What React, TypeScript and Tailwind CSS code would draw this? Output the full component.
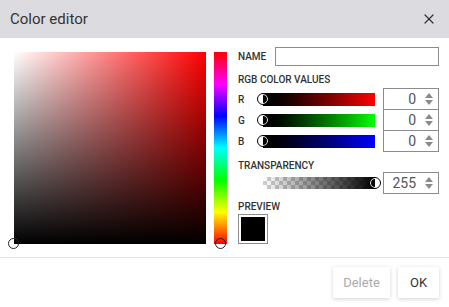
import React from 'react';
import { X } from 'lucide-react';

const Thumb = ({ className }: { className: string }) => (
  <div
    className={`absolute w-[12px] h-[12px] rounded-full border border-black shadow-[inset_0_0_0_1px_#fff] ${className}`}
  />
);

const Spinner = ({ value }: { value: string }) => (
  <div className="w-[56px] h-[22px] border border-[#8c8c8c] bg-white flex items-center justify-end pr-[5px] gap-[9px]">
    <span className="text-[14px] text-[#555] leading-none">{value}</span>
    <div className="flex flex-col items-center gap-[2px]">
      <div className="w-0 h-0 border-x-[4.5px] border-x-transparent border-b-[5px] border-b-[#8a8a8a]" />
      <div className="w-0 h-0 border-x-[4.5px] border-x-transparent border-t-[5px] border-t-[#8a8a8a]" />
    </div>
  </div>
);

const SliderRow = ({ label, gradient, value }: { label: string; gradient: string; value: string }) => (
  <div className="flex items-center h-[22px] -mt-px first:mt-0">
    <span className="w-[25px] text-[10px] font-medium text-[#333]">{label}</span>
    <div className="relative w-[112px] h-[13px]">
      <div className={`w-full h-full ${gradient}`} />
      <Thumb className="-left-[6px] top-[0.5px]" />
    </div>
    <div className="ml-[8px]">
      <Spinner value={value} />
    </div>
  </div>
);

export default function App() {
  return (
    <div className="w-[449px] h-[307px] bg-white flex flex-col font-['Roboto',sans-serif] text-[#333]">
      {/* Header */}
      <div className="h-[38px] bg-[#dcdbe0] flex items-center justify-between pl-[10px] pr-[12px]">
        <span className="text-[15px] text-[#333]">Color editor</span>
        <X size={16} strokeWidth={1.8} className="text-[#333]" />
      </div>

      {/* Body */}
      <div className="flex h-[220px] border-b border-[#e3e3e3] pl-[14px] pt-[9px]">
        <div className="mt-[5px] relative w-[192px] h-[192px] bg-[#ff0000]">
          <div className="absolute inset-0 bg-linear-to-r from-white to-transparent" />
          <div className="absolute inset-0 bg-linear-to-b from-transparent to-black" />
          <div className="absolute -left-[6px] -bottom-[5px] w-[11px] h-[11px] rounded-full border-[1.5px] border-[#222]" />
        </div>
        <div className="mt-[5px] ml-[8px] relative w-[13px] h-[192px] bg-[linear-gradient(to_bottom,#f00,#f0f,#00f,#0ff,#0f0,#ff0,#f00)]">
          <div className="absolute left-[1px] -bottom-[5px] w-[11px] h-[11px] rounded-full border-[1.5px] border-[#222]" />
        </div>

        {/* Right panel */}
        <div className="ml-[11px] flex flex-col">
          <div className="flex items-center h-[19px]">
            <span className="w-[37px] text-[10px] font-medium text-[#333]">NAME</span>
            <div className="w-[164px] h-[19px] border border-[#8c8c8c]" />
          </div>
          <div className="mt-[8px] text-[10px] font-medium text-[#333] leading-[11px]">RGB COLOR VALUES</div>
          <div className="mt-[3px] flex flex-col">
            <SliderRow label="R" value="0" gradient="bg-linear-to-r from-black to-[#ff0000]" />
            <SliderRow label="G" value="0" gradient="bg-linear-to-r from-black to-[#00ff00]" />
            <SliderRow label="B" value="0" gradient="bg-linear-to-r from-black to-[#0000ff]" />
          </div>
          <div className="mt-[8px] text-[10px] font-medium text-[#333] leading-[11px]">TRANSPARENCY</div>
          <div className="mt-[2px] flex items-center h-[20px]">
            <div className="w-[25px]" />
            <div className="relative w-[112px] h-[12px]">
              <div className="w-full h-full [background:linear-gradient(to_right,rgba(0,0,0,0),#000),repeating-conic-gradient(#cfcfcf_0_25%,#fff_0_50%)_0_0/8px_8px]" />
              <Thumb className="-right-[6px] top-0" />
            </div>
            <div className="ml-[8px]">
              <Spinner value="255" />
            </div>
          </div>
          <div className="mt-[8px] text-[10px] font-medium text-[#333] leading-[11px]">PREVIEW</div>
          <div className="mt-[2px] w-[30px] h-[30px] border border-[#8c8c8c] p-[2px] bg-white">
            <div className="w-full h-full bg-black" />
          </div>
        </div>
      </div>

      {/* Footer */}
      <div className="flex justify-end gap-[8px] pr-[10px] pt-[9px]">
        <button className="w-[57px] h-[31px] bg-white text-[13px] text-[#aaa] shadow-[0_1px_4px_rgba(0,0,0,0.18)]">
          Delete
        </button>
        <button className="w-[41px] h-[31px] bg-white text-[13px] text-[#333] shadow-[0_1px_4px_rgba(0,0,0,0.18)]">
          OK
        </button>
      </div>
    </div>
  );
}
